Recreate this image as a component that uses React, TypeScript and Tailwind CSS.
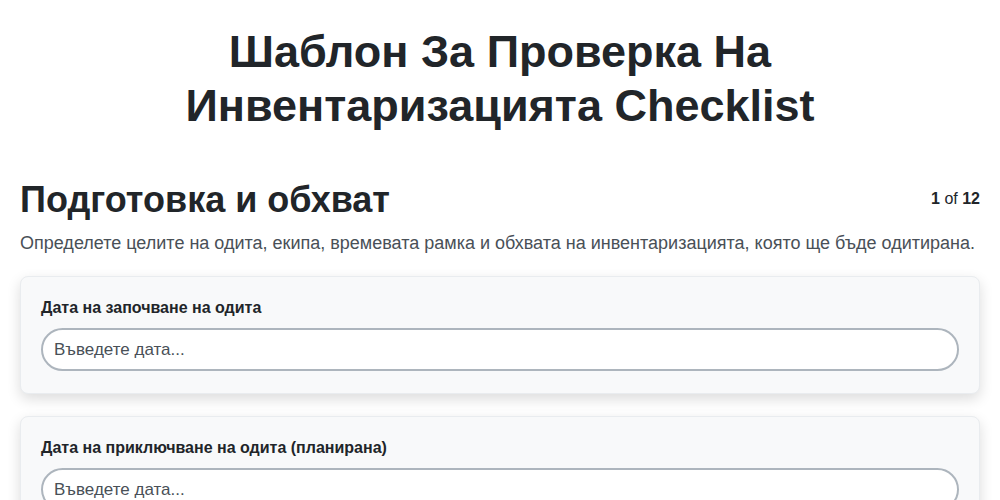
import React from 'react';

const fields = [
  { label: 'Дата на започване на одита', placeholder: 'Въведете дата...' },
  { label: 'Дата на приключване на одита (планирана)', placeholder: 'Въведете дата...' },
  { label: 'Отговорен одитор', placeholder: 'Въведете име...' },
];

export default function App() {
  return (
    <div className="min-h-screen bg-white font-['Liberation_Sans',Arial,sans-serif] text-[#212529]">
      <div className="px-5 pt-[25px] pb-10">
        {/* Title */}
        <h1 className="mx-auto max-w-[700px] text-center text-[45px] font-bold leading-[54px]">
          Шаблон За Проверка На Инвентаризацията Checklist
        </h1>

        {/* Section header */}
        <div className="mt-[45px] flex items-start justify-between">
          <h2 className="text-[36px] font-bold leading-[43px]">Подготовка и обхват</h2>
          <div className="pt-[9px] text-[16px] text-[#212529]">
            <span className="font-bold">1</span> of <span className="font-bold">12</span>
          </div>
        </div>
        <p className="mt-[9px] text-[18px] leading-[26px] text-[#495057]">
          Определете целите на одита, екипа, времевата рамка и обхвата на инвентаризацията, която ще бъде одитирана.
        </p>

        {/* Fields */}
        <div className="mt-[20px] flex flex-col gap-[22px]">
          {fields.map((f) => (
            <div
              key={f.label}
              className="rounded-lg border border-[#e9ecef] bg-[#f8f9fa] px-5 pt-[21px] pb-[22px] shadow-[0_5px_14px_rgba(0,0,0,0.14)]"
            >
              <label className="block text-[16px] font-bold leading-[20px] text-[#212529]">{f.label}</label>
              <input
                type="text"
                placeholder={f.placeholder}
                className="mt-[10px] block h-[43px] w-full rounded-full border-2 border-[#adb5bd] bg-white px-[11px] text-[17px] text-[#212529] outline-none placeholder:text-[#495057]"
              />
            </div>
          ))}
        </div>
      </div>
    </div>
  );
}
